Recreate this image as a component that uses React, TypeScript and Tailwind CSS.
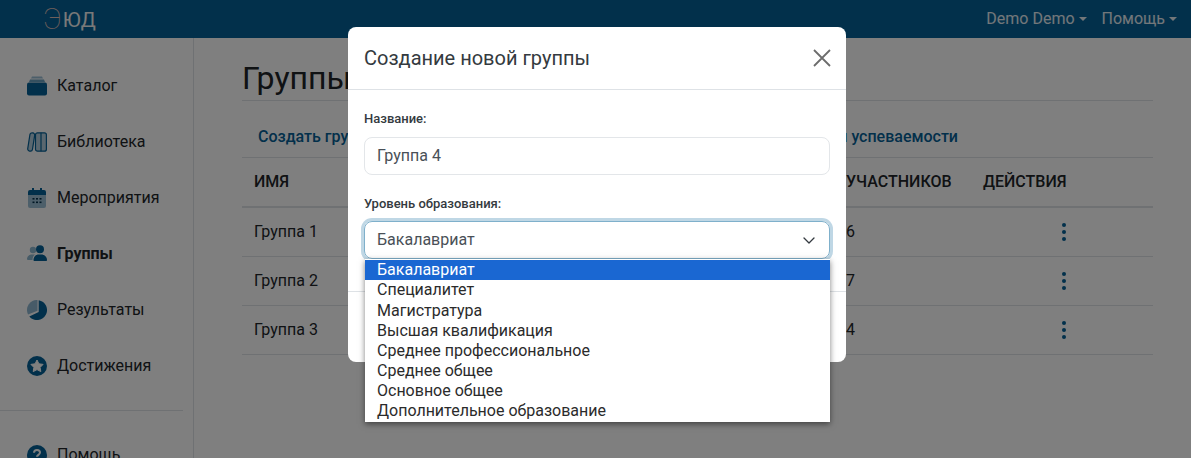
import { ReactNode } from 'react';

const font = { fontFamily: 'Roboto, sans-serif' };

function CatalogIcon() {
  return (
    <svg viewBox="0 0 20 20" className="h-5 w-5">
      <path d="M5 0.500h10l1 2H4z" fill="#056096" opacity="0.4" />
      <path d="M3 3.500h14l1 2.500H2z" fill="#056096" opacity="0.6" />
      <rect x="0" y="6.500" width="20" height="13" rx="2" fill="#056096" />
    </svg>
  );
}

function LibraryIcon() {
  return (
    <svg viewBox="0 0 20 20" className="h-5 w-5" fill="#056096" fillOpacity="0.3" stroke="#056096" strokeWidth="1.200">
      <rect x="1.800" y="0.800" width="4.800" height="18.400" rx="2.200" transform="rotate(9 4.200 10)" />
      <rect x="8.500" y="0.800" width="10.900" height="18.400" rx="2" />
      <path d="M14 0.800v18.400" />
    </svg>
  );
}

function CalendarIcon() {
  return (
    <svg viewBox="0 0 20 20" className="h-5 w-5">
      <path d="M1 7h18v11a2 2 0 0 1-2 2H3a2 2 0 0 1-2-2z" fill="#056096" opacity="0.4" />
      <path d="M3 2h2V0h2v2h6V0h2v2h2a2 2 0 0 1 2 2v3H1V4a2 2 0 0 1 2-2z" fill="#056096" />
      <g fill="#02304b">
        <rect x="5.500" y="10" width="2" height="1.600" />
        <rect x="9" y="10" width="2" height="1.600" />
        <rect x="12.500" y="10" width="2" height="1.600" />
        <rect x="5.500" y="13.500" width="2" height="1.600" />
        <rect x="9" y="13.500" width="2" height="1.600" />
        <rect x="12.500" y="13.500" width="2" height="1.600" />
      </g>
    </svg>
  );
}

function GroupIcon() {
  return (
    <svg viewBox="0 0 20 20" className="h-5 w-5">
      <g fill="#056096" opacity="0.45">
        <circle cx="6" cy="6" r="3.200" />
        <path d="M0 15.500c0-3 2-5 5-5h3c-1.500 1.200-2.500 3-2.500 5.500H1z" />
      </g>
      <g fill="#056096">
        <circle cx="13" cy="5.300" r="4" />
        <path d="M6.500 16c0-3.500 2.500-5.500 5-5.500h3c2.500 0 5.500 2 5.500 5.500 0 .6-.4 1-1 1H7.500c-.6 0-1-.4-1-1z" />
      </g>
    </svg>
  );
}

function PieIcon() {
  return (
    <svg viewBox="0 0 20 20" className="h-5 w-5">
      <path d="M10.500 0A10 10 0 0 0 1 14.400L10.500 10.800z" fill="#056096" opacity="0.45" />
      <path d="M11.700 0.200A10 10 0 1 1 2.300 16.400L11.700 12z" fill="#056096" />
    </svg>
  );
}

function StarIcon() {
  return (
    <svg viewBox="0 0 20 20" className="h-5 w-5">
      <circle cx="10" cy="10" r="10" fill="#056096" />
      <path
        d="M10 4l1.900 3.800 4.200.6-3 3 .7 4.200-3.800-2-3.800 2 .7-4.200-3-3 4.200-.6z"
        fill="#ffffff"
        stroke="#ffffff"
        strokeWidth="1"
        strokeLinejoin="round"
      />
    </svg>
  );
}

function HelpIcon() {
  return (
    <svg viewBox="0 0 20 20" className="h-5 w-5">
      <circle cx="10" cy="10" r="10" fill="#056096" />
      <path d="M7 7.800c0-1.800 1.400-2.800 3-2.800s3 1 3 2.600c0 2.200-3 2.200-3 4.200" fill="none" stroke="#ffffff" strokeWidth="2" />
      <circle cx="10" cy="15" r="1.300" fill="#ffffff" />
    </svg>
  );
}

function NavItem({ icon, label, active }: { icon: ReactNode; label: string; active?: boolean }) {
  return (
    <div className="flex h-14 items-center gap-[10px] pl-[27px]">
      {icon}
      <span className={`text-base text-[#212529] ${active ? 'font-bold' : ''}`}>{label}</span>
    </div>
  );
}

function Caret() {
  return <span className="ml-[4px] inline-block border-x-[4.800px] border-t-[4.800px] border-x-transparent border-t-current align-[3px]" />;
}

function Kebab() {
  return (
    <svg viewBox="0 0 6 20" className="h-5 w-[6px]" fill="#056096">
      <circle cx="3" cy="3" r="2" />
      <circle cx="3" cy="10" r="2" />
      <circle cx="3" cy="17" r="2" />
    </svg>
  );
}

const rows = [
  { name: 'Группа 1', count: 6 },
  { name: 'Группа 2', count: 7 },
  { name: 'Группа 3', count: 4 },
];

const levels = [
  'Бакалавриат',
  'Специалитет',
  'Магистратура',
  'Высшая квалификация',
  'Среднее профессиональное',
  'Среднее общее',
  'Основное общее',
  'Дополнительное образование',
];

export default function App() {
  return (
    <div className="relative h-[458px] w-[1191px] overflow-hidden bg-white text-[#212529]" style={font}>
      {/* Header */}
      <div className="flex h-[38px] items-center justify-between bg-[#056096] pl-[43px] pr-[14px]">
        <div className="flex items-center leading-none">
          <span className="text-[29px] font-thin leading-none text-[#e0c0b8]">Э</span>
          <span className="ml-[1px] mt-[2px] text-[20px] leading-none tracking-[0.4px] text-[#f2f2f2]">ЮД</span>
        </div>
        <div className="flex gap-[15px] text-base text-white/90">
          <span>Demo Demo<Caret /></span>
          <span>Помощь<Caret /></span>
        </div>
      </div>

      <div className="flex h-[420px]">
        {/* Sidebar */}
        <div className="w-[194px] shrink-0 border-r border-[#dee2e6] pt-5">
          <NavItem icon={<CatalogIcon />} label="Каталог" />
          <NavItem icon={<LibraryIcon />} label="Библиотека" />
          <NavItem icon={<CalendarIcon />} label="Мероприятия" />
          <NavItem icon={<GroupIcon />} label="Группы" active />
          <NavItem icon={<PieIcon />} label="Результаты" />
          <NavItem icon={<StarIcon />} label="Достижения" />
          <div className="mr-[10px] mt-4 border-t border-[#dee2e6]" />
          <div className="mt-4">
            <NavItem icon={<HelpIcon />} label="Помощь" />
          </div>
        </div>

        {/* Main */}
        <div className="flex-1 pl-[48px] pr-[38px]">
          <h1 className="flex h-[63px] items-end border-b border-[#dee2e6] pb-[3px] text-[32px] leading-[38px]">Группы</h1>
          <div className="flex h-[57px] items-center justify-between border-b border-[#dee2e6] pl-4 pr-[195px] pt-[15px] text-base font-medium text-[#056096]">
            <span>Создать группу</span>
            <span>Журнал успеваемости</span>
          </div>
          <div className="flex h-[50px] items-center border-b-2 border-[#dee2e6] pl-3 text-base font-medium">
            <span className="w-[592px]">ИМЯ</span>
            <span className="w-[137px]">УЧАСТНИКОВ</span>
            <span>ДЕЙСТВИЯ</span>
          </div>
          {rows.map((row) => (
            <div key={row.name} className="flex h-[49px] items-center border-b border-[#dee2e6] pl-3 text-base">
              <span className="w-[592px]">{row.name}</span>
              <span className="w-[215px]">{row.count}</span>
              <Kebab />
            </div>
          ))}
        </div>
      </div>

      {/* Backdrop */}
      <div className="absolute inset-0 bg-black/50" />

      {/* Modal */}
      <div className="absolute left-[348px] top-[27px] h-[335px] w-[498px] rounded-lg bg-white">
        <div className="flex h-[63px] items-center justify-between border-b border-[#dee2e6] px-4">
          <span className="text-xl text-[#343a40]">Создание новой группы</span>
          <svg viewBox="0 0 18 18" className="-mr-[1px] h-[18px] w-[18px]" fill="none" stroke="#6c6c6c" strokeWidth="1.800">
            <path d="M1 1l16 16M17 1L1 17" />
          </svg>
        </div>
        <div className="h-[202px] border-b border-[#dee2e6] px-4 pt-[21px]">
          <div className="mb-[11px] text-[13px] font-medium leading-[15px] text-[#343a40]">Название:</div>
          <div className="flex h-[38px] items-center rounded-lg border border-[#e3e6e9] px-3 text-base text-[#495057]">Группа 4</div>
          <div className="mb-[10px] mt-[21px] text-[13px] font-medium leading-[15px] text-[#343a40]">Уровень образования:</div>
          <div className="flex h-[38px] items-center justify-between rounded-lg border border-[#7fb0cb] px-3 text-base text-[#495057] shadow-[0_0_0_3px_#bfd7e5]">
            <span>Бакалавриат</span>
            <svg viewBox="0 0 12 7" className="mr-[2px] h-[7px] w-3" fill="none" stroke="#343a40" strokeWidth="1.300" strokeLinecap="round" strokeLinejoin="round">
              <path d="M1 1l5 5 5-5" />
            </svg>
          </div>
        </div>
      </div>

      {/* Select dropdown */}
      <div className="absolute left-[365px] top-[259px] w-[465px] bg-white pb-[1px] pt-[1.400px] text-base leading-[20.100px] text-[#2b2b2b] shadow-[0_2px_6px_rgba(0,0,0,0.5)]">
        {levels.map((level, i) => (
          <div key={level} className={`h-[20.100px] pl-3 ${i === 0 ? 'bg-[#1a67d2] text-white' : ''}`}>
            {level}
          </div>
        ))}
      </div>
    </div>
  );
}
